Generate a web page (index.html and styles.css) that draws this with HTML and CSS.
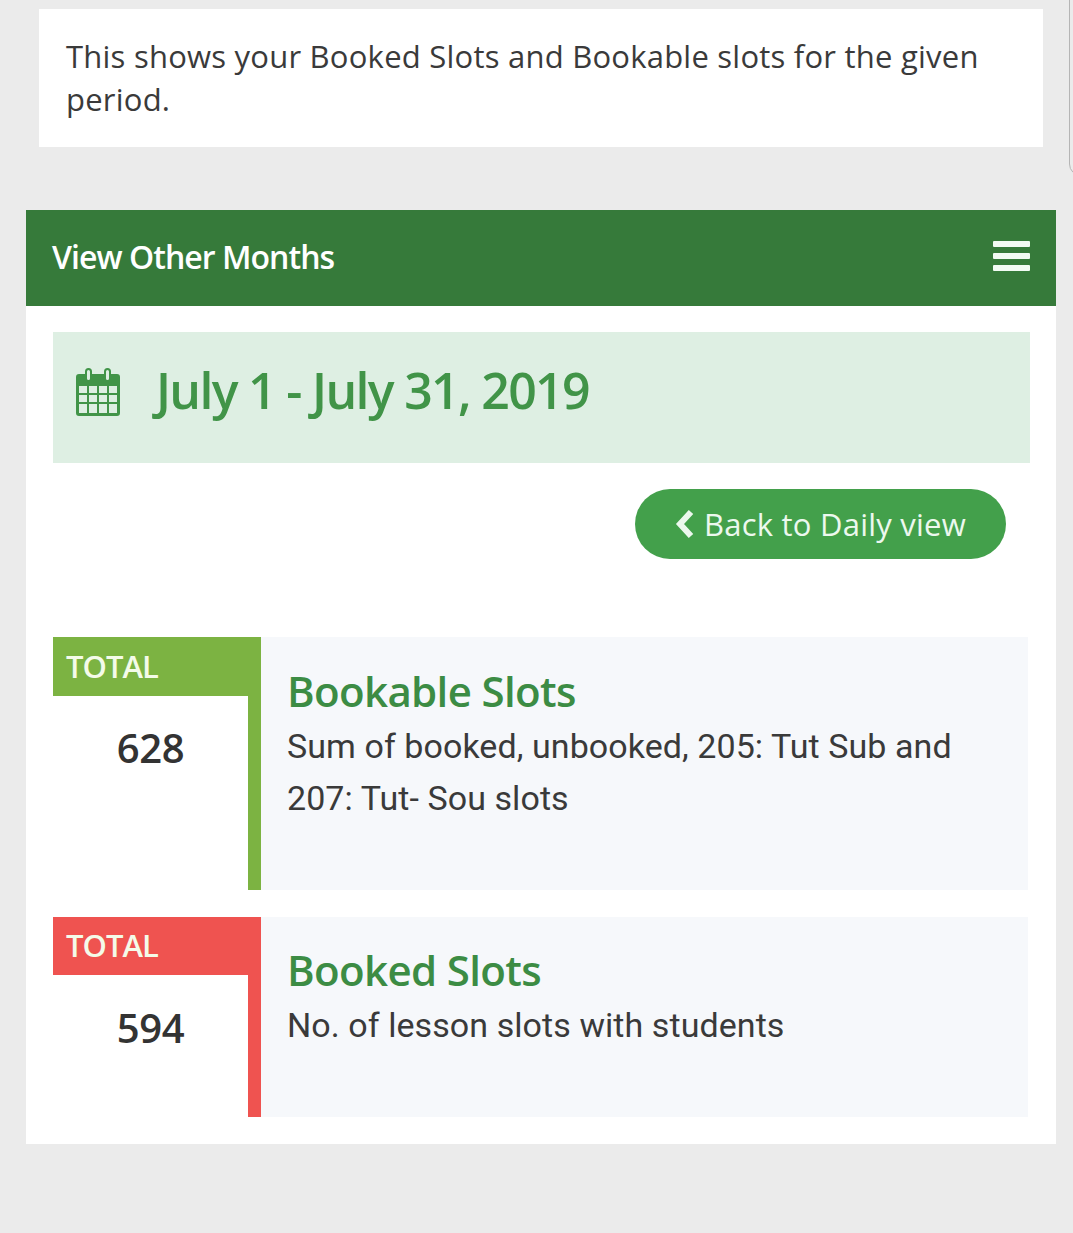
FILE: index.html
```html
<!DOCTYPE html>
<html lang="en">
<head>
<meta charset="utf-8">
<title>Booked Slots</title>
<link rel="stylesheet" href="styles.css">
</head>
<body>
<div class="frame-edge"></div>
<section class="note"><p>This shows your Booked Slots and Bookable slots for the given period.</p></section>
<main class="panel">
  <header class="panel-head">
    <h2>View Other Months</h2>
    <svg class="burger" viewBox="0 0 37 30" aria-hidden="true"><rect y="0" width="37" height="6" rx="1"/><rect y="12" width="37" height="6" rx="1"/><rect y="24" width="37" height="6" rx="1"/></svg>
  </header>
  <div class="panel-body">
    <div class="date-bar">
      <svg class="cal" viewBox="0 0 44 48" aria-hidden="true">
        <path fill-rule="evenodd" d="M3 6H9V3.500A3.500 3.500 0 0 1 16 3.500V6H28V3.500A3.500 3.500 0 0 1 35 3.500V6H41A3 3 0 0 1 44 9V45A3 3 0 0 1 41 48H3A3 3 0 0 1 0 45V9A3 3 0 0 1 3 6ZM11 3.500V10.500A1.500 1.500 0 0 0 14 10.500V3.500A1.500 1.500 0 0 0 11 3.500ZM30 3.500V10.500A1.500 1.500 0 0 0 33 10.500V3.500A1.500 1.500 0 0 0 30 3.500ZM3 18V25H11V18ZM13 18V25H21V18ZM23 18V25H31V18ZM33 18V25H41V18ZM3 27V34H11V27ZM13 27V34H21V27ZM23 27V34H31V27ZM33 27V34H41V27ZM3 36V45H11V36ZM13 36V45H21V36ZM23 36V45H31V36ZM33 36V45H41V36Z"/>
      </svg>
      <h1>July 1 - July 31, 2019</h1>
    </div>
    <div class="actions">
      <a class="back" href="#">
        <svg class="chev" viewBox="0 0 20 30" aria-hidden="true"><path d="M16 3 5 15l11 12" /></svg>
        <span>Back to Daily view</span>
      </a>
    </div>
    <article class="stat stat-green">
      <div class="stat-side">
        <div class="stat-label">TOTAL</div>
        <div class="stat-num">628</div>
      </div>
      <div class="stat-main">
        <h3>Bookable Slots</h3>
        <p>Sum of booked, unbooked, 205: Tut Sub and 207: Tut- Sou slots</p>
      </div>
    </article>
    <article class="stat stat-red">
      <div class="stat-side">
        <div class="stat-label">TOTAL</div>
        <div class="stat-num">594</div>
      </div>
      <div class="stat-main">
        <h3>Booked Slots</h3>
        <p>No. of lesson slots with students</p>
      </div>
    </article>
  </div>
</main>
</body>
</html>
```
FILE: styles.css
```css
* { box-sizing: border-box; }
html, body { margin: 0; padding: 0; }
body {
  position: relative;
  height: 1233px;
  overflow: hidden;
  padding-top: 9px;
  background: #ebebeb;
  font-family: "Open Sans", "Liberation Sans", sans-serif;
  color: #333;
}
h1, h2, h3, p { margin: 0; font-weight: 400; }

.frame-edge {
  position: absolute;
  top: -12px;
  right: -12px;
  width: 16px;
  height: 188px;
  border: 1px solid #b5b5b5;
  border-radius: 0 0 0 12px;
}

.note {
  height: 138px;
  margin: 0 30px 0 39px;
  padding: 26px 27px 0;
  background: #fff;
}
.note p { font-size: 31px; line-height: 43px; letter-spacing: .23px; color: #3a3a3a; }

.panel { width: 1030px; margin: 63px 0 0 26px; background: #fff; }
.panel-head {
  display: flex;
  align-items: center;
  justify-content: space-between;
  height: 96px;
  padding: 0 26px 4px;
  background: #367a3a;
  color: #fff;
}
.panel-head h2 { font-size: 32px; font-weight: 600; letter-spacing: -.95px; }
.burger { width: 37px; height: 30px; fill: #f2fbf3; }

.panel-body { padding: 26px 26px 27px 27px; }

.date-bar {
  display: flex;
  align-items: center;
  gap: 36px;
  height: 131px;
  padding: 0 0 15px 23px;
  background: #deefe3;
  color: #419448;
}
.cal { width: 44px; height: 48px; margin-top: 4px; fill: #419448; }
.date-bar h1 { font-size: 50px; font-weight: 600; letter-spacing: -1.67px; }

.actions { display: flex; justify-content: flex-end; padding: 26px 24px 78px 0; }
.back {
  display: flex;
  align-items: center;
  justify-content: center;
  gap: 9px;
  width: 371px;
  height: 70px;
  border-radius: 35px;
  background: #43a04b;
  color: #ecf8ee;
  font-size: 31px;
  letter-spacing: .23px;
  text-decoration: none;
}
.chev { width: 20px; height: 30px; fill: none; stroke: #ecf8ee; stroke-width: 6; }

.stat { display: flex; width: 975px; margin-bottom: 27px; background: #fff; }
.stat:last-child { margin-bottom: 0; }
.stat-green { height: 253px; --accent: #7cb342; --label-h: 59px; --label-pad: 9px; --num-pad: 25px; --title-pad: 26px; }
.stat-red { height: 200px; --accent: #ef5350; --label-h: 58px; --label-pad: 8px; --num-pad: 26px; --title-pad: 25px; }
.stat-side { width: 208px; border-right: 13px solid var(--accent); }
.stat-label {
  width: 208px;
  height: var(--label-h);
  padding: var(--label-pad) 0 0 13px;
  background: var(--accent);
  color: #f4fbe9;
  font-size: 31px;
  font-weight: 600;
  line-height: 40px;
  letter-spacing: -1px;
}
.stat-num {
  padding-top: var(--num-pad);
  text-align: center;
  font-size: 40px;
  font-weight: 600;
  line-height: 54px;
  letter-spacing: -.4px;
}
.stat-main { flex: 1; padding: var(--title-pad) 20px 0 26px; background: #f6f8fb; }
.stat-main h3 {
  font-size: 42px;
  font-weight: 600;
  line-height: 56px;
  letter-spacing: -.65px;
  color: #3c8c44;
}
.stat-main p { margin-top: 1px; font-size: 34px; line-height: 52px; letter-spacing: .07px; color: #3a3a3a; font-family: Roboto, "Open Sans", sans-serif; }
```
